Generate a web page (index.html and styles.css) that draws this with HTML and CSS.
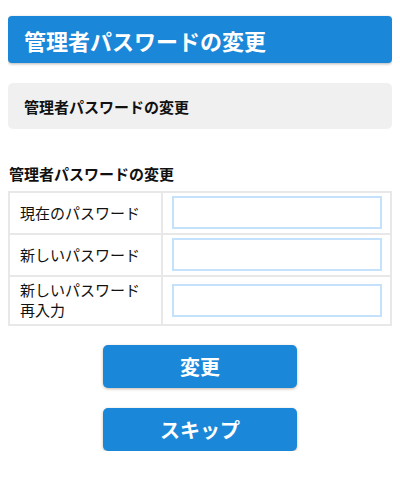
FILE: index.html
```html
<!DOCTYPE html>
<html lang="ja">
<head>
    <meta charset="UTF-8">
    <meta name="viewport" content="width=device-width, initial-scale=1.0">
    <title>管理者パスワードの変更</title>
    <link rel="stylesheet" href="styles.css">
</head>
<body>

    <h1 class="page-title">管理者パスワードの変更</h1>

    <div class="info-box">管理者パスワードの変更</div>

    <form>
        <h2 class="section-title">管理者パスワードの変更</h2>
        <table class="pw-table">
            <tr>
                <th>現在のパスワード</th>
                <td><input type="password" name="current"></td>
            </tr>
            <tr>
                <th>新しいパスワード</th>
                <td><input type="password" name="newpass"></td>
            </tr>
            <tr>
                <th>新しいパスワード<br>再入力</th>
                <td><input type="password" name="confirm"></td>
            </tr>
        </table>

        <div class="buttons">
            <button type="submit" class="btn">変更</button>
            <button type="button" class="btn">スキップ</button>
        </div>
    </form>

</body>
</html>
```

FILE: styles.css
```css
body {
    margin: 8px;
    background-color: #fff;
    font-family: "Noto Sans CJK JP", "Noto Sans", sans-serif;
    color: #111;
}

.page-title {
    margin: 8px 0 0;
    height: 47px;
    padding: 0 16px;
    box-sizing: border-box;
    display: flex;
    align-items: center;
    background-color: #1a87d8;
    color: #fff;
    font-size: 22px;
    font-weight: bold;
    border-radius: 4px;
    box-shadow: 0px 1px 3px rgba(0, 0, 0, 0.3);
}

.info-box {
    margin-top: 20px;
    height: 46px;
    padding: 0 16px;
    box-sizing: border-box;
    display: flex;
    align-items: center;
    background-color: #f0f0f0;
    border-radius: 5px;
    font-size: 15px;
    font-weight: bold;
}

.section-title {
    margin: 33px 0 0;
    padding-left: 1px;
    font-size: 15px;
    line-height: 24px;
    font-weight: bold;
}

.pw-table {
    width: 100%;
    margin-top: 5px;
    border-collapse: collapse;
    border: 2px solid #e8e8e8;
}

.pw-table th,
.pw-table td {
    border: 2px solid #e8e8e8;
    padding: 3px 8px 4px 9px;
}

.pw-table th {
    width: 40%;
    box-sizing: border-box;
    text-align: left;
    font-weight: normal;
    font-size: 15px;
    line-height: 20px;
    padding-left: 10px;
}

.pw-table input {
    display: block;
    width: 100%;
    height: 33px;
    box-sizing: border-box;
    border: 2px solid #c4e2fb;
    font-size: 16px;
    padding: 4px;
}

.buttons {
    display: flex;
    flex-direction: column;
    align-items: center;
    gap: 20px;
    margin-top: 19px;
}

.btn {
    width: 194px;
    height: 43px;
    border: none;
    border-radius: 5px;
    background-color: #1a87d8;
    color: #fff;
    font-family: inherit;
    font-size: 20px;
    font-weight: bold;
    cursor: pointer;
    box-shadow: 0px 1px 3px rgba(120, 80, 40, 0.4);
}
```
